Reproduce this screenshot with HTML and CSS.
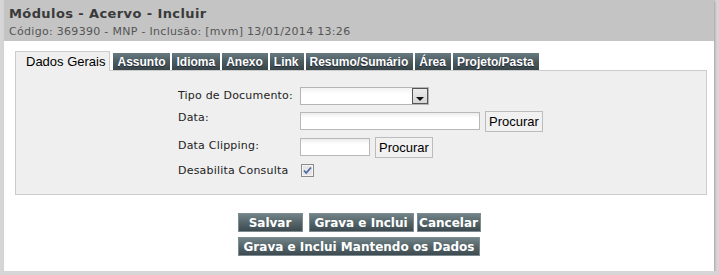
FILE: index.html
```html
<!DOCTYPE html>
<html>
<head>
	<title>Módulos - Acervo - Incluir</title>
	<link rel="stylesheet" href="styles.css">
</head>
<body>
	<div class="window">
		<div class="header">
			<h1>Módulos - Acervo - Incluir</h1>
			<p>Código: 369390 - MNP - Inclusão: [mvm] 13/01/2014 13:26</p>
		</div>
		<div class="content">
			<ul class="tabs">
				<li class="active">Dados Gerais</li>
				<li>Assunto</li>
				<li>Idioma</li>
				<li>Anexo</li>
				<li>Link</li>
				<li>Resumo/Sumário</li>
				<li>Área</li>
				<li>Projeto/Pasta</li>
			</ul>
			<div class="panel">
				<form class="form">
					<div class="form-row row-select">
						<label for="tipo">Tipo de Documento:</label>
						<span class="select-wrap">
							<select id="tipo" name="tipo"></select>
						</span>
					</div>
					<div class="form-row row-data">
						<label for="data">Data:</label>
						<input type="text" id="data" name="data" class="input-long">
						<button type="button" class="btn-light">Procurar</button>
					</div>
					<div class="form-row row-clip">
						<label for="clipping">Data Clipping:</label>
						<input type="text" id="clipping" name="clipping" class="input-short">
						<button type="button" class="btn-light">Procurar</button>
					</div>
					<div class="form-row row-check">
						<label for="desabilita">Desabilita Consulta</label>
						<span class="checkbox" id="desabilita" role="checkbox" aria-checked="true">
							<svg width="13" height="13" viewBox="0 0 13 13">
								<rect x="0.5" y="0.5" width="12" height="12" fill="#e6e6e6" stroke="#8c8c8c"/>
								<rect x="1.5" y="1.5" width="10" height="10" fill="none" stroke="#f4f4f4"/>
								<path d="M3 6.5 L5.2 9 L10 3.5" fill="none" stroke="#4b68a8" stroke-width="1.8"/>
							</svg>
						</span>
					</div>
				</form>
			</div>
			<div class="actions">
				<div class="actions-row">
					<button type="button" class="btn-dark btn-salvar">Salvar</button>
					<button type="button" class="btn-dark btn-grava">Grava e Inclui</button>
					<button type="button" class="btn-dark btn-cancelar">Cancelar</button>
				</div>
				<div class="actions-row">
					<button type="button" class="btn-dark btn-wide">Grava e Inclui Mantendo os Dados</button>
				</div>
			</div>
		</div>
	</div>
</body>
</html>
```

FILE: styles.css
```css
body {
	margin: 0;
	background: #d6d6d6;
	font-family: "DejaVu Sans", Verdana, sans-serif;
	font-size: 11px;
	color: #222;
}

.window {
	margin-left: 4px;
	width: 710px;
	height: 271px;
	background: #fff;
	box-shadow: 1px 1px 2px rgba(0, 0, 0, 0.25);
}

.header {
	background: #c4c4c4;
	height: 41px;
	padding: 0 5px;
	box-sizing: border-box;
}

.header h1 {
	margin: 0;
	padding-top: 6px;
	font-size: 13px;
	line-height: 16px;
	font-weight: bold;
	letter-spacing: 0.4px;
	color: #3a3a3a;
}

.header p {
	margin: 3px 0 0;
	font-size: 11px;
	line-height: 14px;
	letter-spacing: 0.3px;
	color: #555;
}

.content {
	padding: 9px 7px 0 11px;
}

.tabs {
	list-style: none;
	margin: 0;
	padding: 0;
	display: flex;
	align-items: flex-end;
	gap: 2px;
	height: 20px;
}

.tabs li {
	height: 17px;
	line-height: 18px;
	padding: 0 5px 0 4px;
	font-family: "Liberation Sans", Arial, sans-serif;
	font-size: 12px;
	font-weight: bold;
	color: #fff;
	text-shadow: 0 1px 1px #223;
	background: linear-gradient(#687b81, #4b5c61 50%, #384649);
}

.tabs li.active {
	height: 20px;
	line-height: 20px;
	box-sizing: border-box;
	padding: 0 4px 0 10px;
	margin-right: 1px;
	font-size: 13px;
	font-weight: normal;
	color: #000;
	text-shadow: none;
	background: #efefef;
	border: 1px solid #ccc;
	border-bottom: none;
	margin-bottom: -1px;
	position: relative;
}

.panel {
	background: #efefef;
	border: 1px solid #ccc;
	height: 125px;
	box-sizing: border-box;
	padding: 16px 0 0 162px;
}

.form-row {
	display: flex;
	align-items: flex-start;
	gap: 5px;
	margin-bottom: 6px;
}

.form-row label {
	width: 117px;
	line-height: 14px;
	letter-spacing: 0.2px;
}

.row-select label {
	padding-top: 2px;
}

.row-clip label {
	padding-top: 1px;
}

.row-clip .btn-light {
	margin-top: -1px;
}

.row-check {
	margin-top: 2px;
}

.select-wrap {
	position: relative;
	display: inline-block;
}

.select-wrap select {
	appearance: none;
	width: 129px;
	height: 18px;
	margin: 0;
	border: 1px solid #b4b4b4;
	background: linear-gradient(#f2f2f2, #fff 6px);
	display: block;
}

.select-wrap::after {
	content: "";
	position: absolute;
	right: 1px;
	top: 1px;
	width: 14px;
	height: 14px;
	border: 1px solid #555;
	background: linear-gradient(#ececec, #d6d6d6);
}

.select-wrap::before {
	content: "";
	position: absolute;
	right: 5px;
	top: 10px;
	border-left: 4px solid transparent;
	border-right: 4px solid transparent;
	border-top: 4px solid #111;
	z-index: 1;
}

.form-row input[type="text"] {
	height: 18px;
	margin: 0;
	padding: 0 2px;
	box-sizing: border-box;
	border: 1px solid #b8b8b8;
	background: linear-gradient(#ececec, #fff 5px);
}

.row-data input[type="text"] {
	margin-top: 1px;
}

.input-long {
	width: 180px;
}

.input-short {
	width: 70px;
}

.row-clip .input-short {
	margin-right: -1px;
}

.btn-light {
	height: 21px;
	margin: 0;
	padding: 0 3px;
	border: 1px solid #bcbcbc;
	background: #f1f1f1;
	font-family: "Liberation Sans", Arial, sans-serif;
	font-size: 13px;
	color: #000;
}

.checkbox {
	display: block;
	width: 13px;
	height: 13px;
	margin-left: 1px;
}

.checkbox svg {
	display: block;
}

.actions {
	padding: 18px 4px 0 0;
	display: flex;
	flex-direction: column;
	align-items: center;
	gap: 5px;
}

.actions-row {
	display: flex;
	gap: 3px;
}

.btn-dark {
	height: 19px;
	margin: 0;
	padding: 0;
	border: 1px solid #7e8c91;
	background: linear-gradient(#728388, #55656a 50%, #3d4b50);
	font-family: "DejaVu Sans", Verdana, sans-serif;
	font-size: 12px;
	font-weight: bold;
	color: #fff;
	line-height: 16px;
}

.btn-salvar {
	width: 65px;
	margin-right: 3px;
}

.btn-grava {
	width: 105px;
}

.btn-cancelar {
	width: 64px;
}

.btn-wide {
	width: 242px;
}
```
